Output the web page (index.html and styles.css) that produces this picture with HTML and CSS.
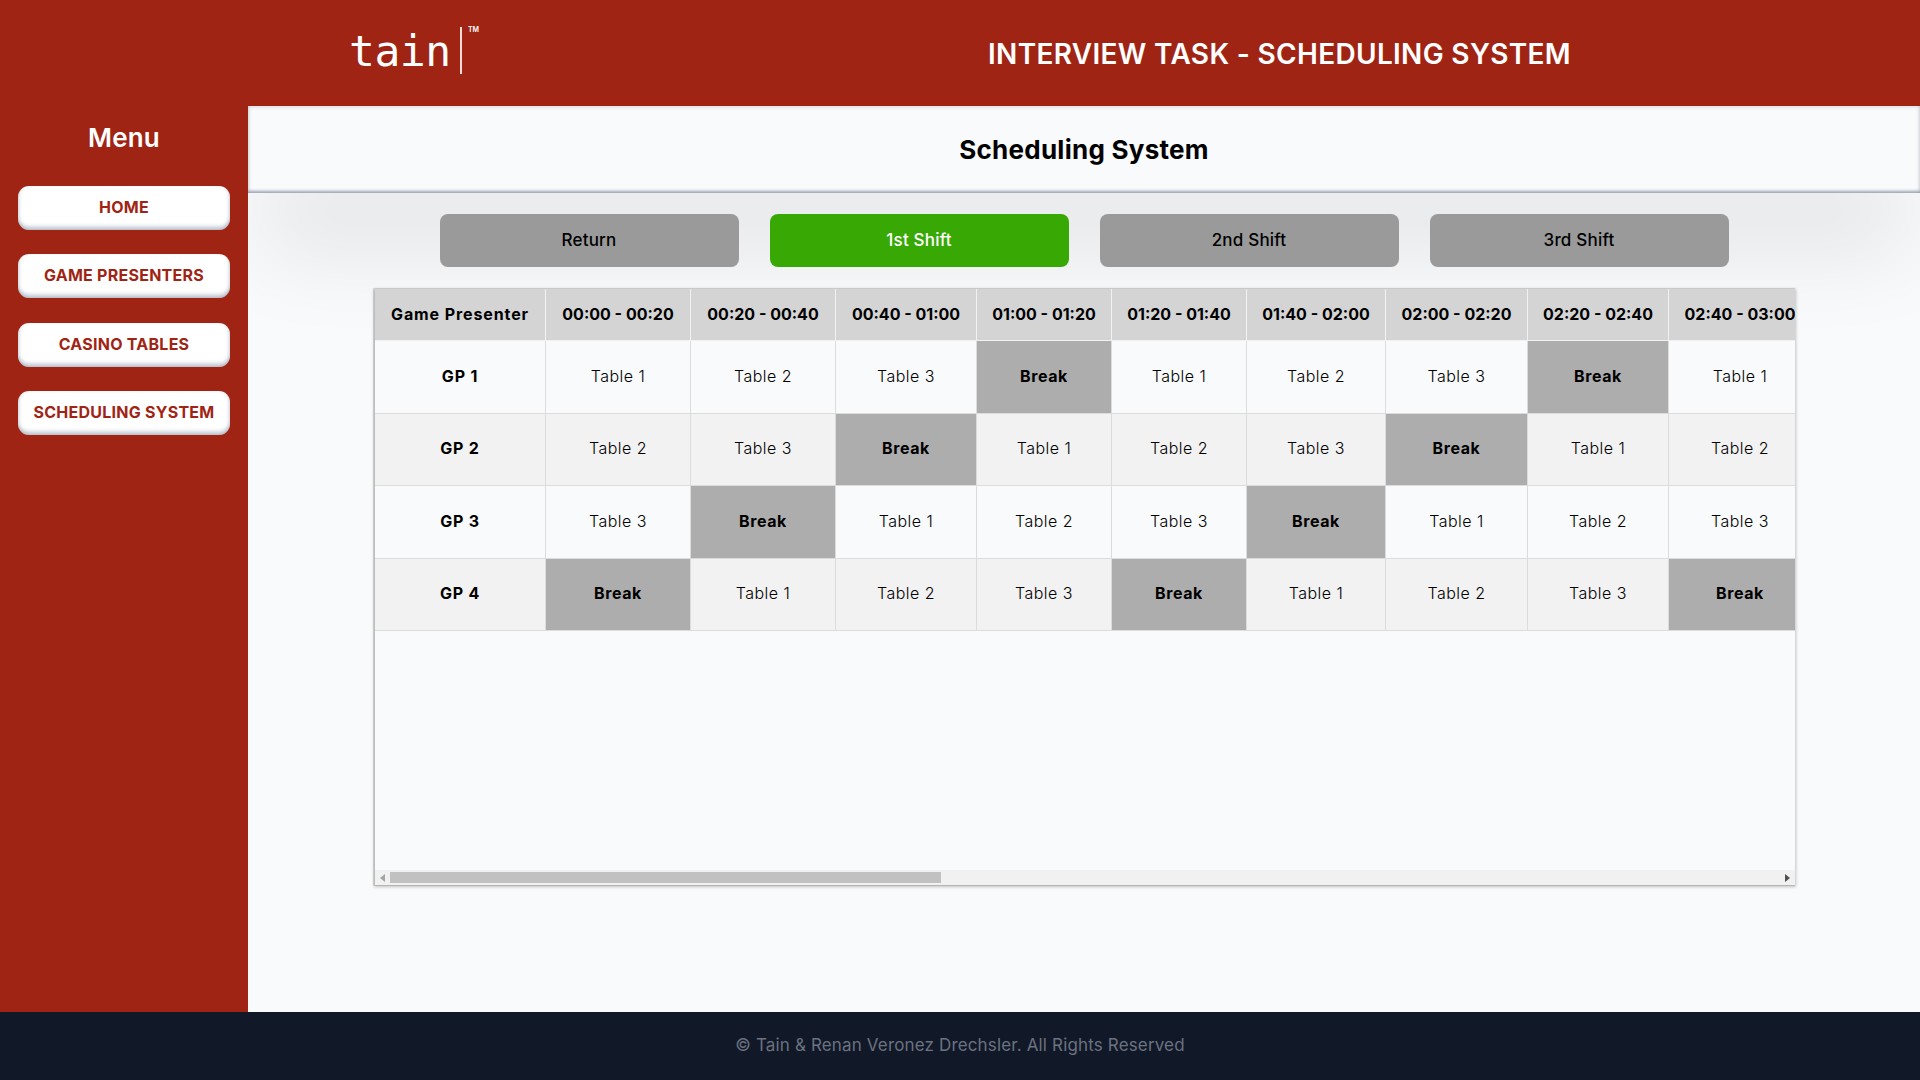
FILE: index.html
```html
<!DOCTYPE html>
<html lang="en">
    <head>
        <meta charset="UTF-8" />
        <meta name="viewport" content="width=device-width, initial-scale=1.0" />
        <title>Scheduling System</title>
        <link rel="stylesheet" href="styles.css">
    </head>
    <body>
        <header class="topbar">
            <div class="logo">
                <span class="logo-word">tain</span>
                <span class="logo-bar"></span>
                <span class="logo-tm">TM</span>
            </div>
            <h1 class="app-title">INTERVIEW TASK - SCHEDULING SYSTEM</h1>
        </header>

        <div class="shell">
            <nav class="sidebar">
                <h2>Menu</h2>
                <a class="nav-btn" href="#">HOME</a>
                <a class="nav-btn" href="#">GAME PRESENTERS</a>
                <a class="nav-btn" href="#">CASINO TABLES</a>
                <a class="nav-btn" href="#">SCHEDULING SYSTEM</a>
            </nav>

            <main class="content">
                <div class="page-title"><h2>Scheduling System</h2></div>

                <div class="shifts">
                    <button class="shift">Return</button>
                    <button class="shift active">1st Shift</button>
                    <button class="shift">2nd Shift</button>
                    <button class="shift">3rd Shift</button>
                </div>

                <div class="table-wrap">
                    <div class="table-view">
                        <table class="schedule">
                            <thead>
                                <tr><th>Game Presenter</th><th>00:00 - 00:20</th><th>00:20 - 00:40</th><th>00:40 - 01:00</th><th>01:00 - 01:20</th><th>01:20 - 01:40</th><th>01:40 - 02:00</th><th>02:00 - 02:20</th><th>02:20 - 02:40</th><th>02:40 - 03:00</th></tr>
                            </thead>
                            <tbody>
                                <tr><td class="gp">GP 1</td><td>Table 1</td><td>Table 2</td><td>Table 3</td><td class="break">Break</td><td>Table 1</td><td>Table 2</td><td>Table 3</td><td class="break">Break</td><td>Table 1</td></tr>
                                <tr><td class="gp">GP 2</td><td>Table 2</td><td>Table 3</td><td class="break">Break</td><td>Table 1</td><td>Table 2</td><td>Table 3</td><td class="break">Break</td><td>Table 1</td><td>Table 2</td></tr>
                                <tr><td class="gp">GP 3</td><td>Table 3</td><td class="break">Break</td><td>Table 1</td><td>Table 2</td><td>Table 3</td><td class="break">Break</td><td>Table 1</td><td>Table 2</td><td>Table 3</td></tr>
                                <tr><td class="gp">GP 4</td><td class="break">Break</td><td>Table 1</td><td>Table 2</td><td>Table 3</td><td class="break">Break</td><td>Table 1</td><td>Table 2</td><td>Table 3</td><td class="break">Break</td></tr>
                            </tbody>
                        </table>
                    </div>
                    <div class="scrollbar">
                        <span class="arrow arrow-left"></span>
                        <div class="scroll-track"><div class="scroll-thumb"></div></div>
                        <span class="arrow arrow-right"></span>
                    </div>
                </div>
            </main>
        </div>

        <footer class="footer">© Tain &amp; Renan Veronez Drechsler. All Rights Reserved</footer>
    </body>
</html>
```

FILE: styles.css
```css
* {
    box-sizing: border-box;
}
body {
    margin: 0;
    height: 100vh;
    overflow: hidden;
    display: flex;
    flex-direction: column;
    font-family: Inter, "Noto Sans", sans-serif;
    background: #f9fafb;
    color: #000;
}

/* top bar */
.topbar {
    height: 106px;
    flex: none;
    display: flex;
    background: #a02414;
    color: #fff;
    padding-left: 349px;
}
.logo {
    width: 639px;
    display: flex;
    align-items: flex-start;
}
.logo-word {
    font-family: "DejaVu Sans Mono", monospace;
    font-size: 43px;
    line-height: 50px;
    margin-top: 26px;
    letter-spacing: -0.5px;
    width: 111px;
}
.logo-bar {
    width: 2px;
    height: 47px;
    margin-top: 27px;
    background: #f3ddd9;
}
.logo-tm {
    font-size: 7px;
    font-weight: 600;
    line-height: 8px;
    margin: 26px 0 0 6px;
}
.app-title {
    margin: 0;
    align-self: center;
    padding-top: 1px;
    font-size: 28px;
    font-weight: 600;
    letter-spacing: 0.32px;
    white-space: nowrap;
}

/* sidebar */
.shell {
    flex: 1;
    display: flex;
    min-height: 0;
}
.sidebar {
    width: 248px;
    flex: none;
    background: #a02414;
    padding: 0 18px;
    display: flex;
    flex-direction: column;
}
.sidebar h2 {
    margin: 14px 0 31px;
    height: 35px;
    line-height: 35px;
    text-align: center;
    color: #fff;
    font-size: 26px;
    font-weight: 600;
    letter-spacing: 0.2px;
}
.nav-btn {
    height: 44px;
    margin-bottom: 24.3px;
    padding-bottom: 2px;
    display: flex;
    align-items: center;
    justify-content: center;
    background: #fff;
    border-radius: 11px;
    color: #a02414;
    font-size: 16px;
    font-weight: 700;
    letter-spacing: 0.25px;
    text-decoration: none;
    white-space: nowrap;
    box-shadow: inset 0 -4px 4px -1px rgba(100, 116, 139, 0.45), inset -3px 0 4px -3px rgba(100, 116, 139, 0.3), inset 3px 0 4px -3px rgba(100, 116, 139, 0.3);
}

/* main */
.content {
    flex: 1;
    min-width: 0;
    display: flex;
    flex-direction: column;
    overflow: hidden;
    position: relative;
}
/* soft grey glow that sits under the title bar */
.content::before {
    content: "";
    position: absolute;
    top: 0;
    left: 10px;
    right: 10px;
    height: 87px;
    box-shadow: 0 60px 90px rgba(0, 0, 0, 0.085);
}
.page-title {
    height: 87px;
    flex: none;
    display: flex;
    align-items: center;
    justify-content: center;
    background: #f9fafb;
    box-shadow: inset 0 0 4px rgba(100, 116, 139, 0.35), inset 0 -3px 3px -1px rgba(100, 116, 139, 0.55);
    position: relative;
}
.page-title h2 {
    margin: 0;
    font-size: 26px;
    font-weight: 700;
    letter-spacing: 0.25px;
}
.shifts {
    display: flex;
    justify-content: center;
    gap: 31px;
    margin-top: 21px;
    position: relative;
}
.shift {
    width: 299px;
    height: 53px;
    padding-bottom: 2px;
    border: none;
    border-radius: 8px;
    background: #9a9a9a;
    color: #000;
    font-family: inherit;
    font-size: 17px;
    font-weight: 500;
    letter-spacing: 0.2px;
    cursor: pointer;
}
.shift.active {
    background: #38a804;
    color: #fff;
}

/* table */
.table-wrap {
    width: 1420px;
    height: 596px;
    flex: none;
    margin: 22px 0 0 127px;
    display: flex;
    flex-direction: column;
    background: #f9fafb;
    box-shadow: 0 1px 3px 1px rgba(0, 0, 0, 0.22), -1px 0 0 1px #dcdcdc;
    position: relative;
}
.table-view {
    flex: 1;
    min-height: 0;
    overflow: hidden;
}
.schedule {
    table-layout: fixed;
    width: 1437px;
    border-collapse: separate;
    border-spacing: 0;
    text-align: center;
    font-size: 16px;
}
.schedule th {
    width: 142px;
    height: 52px;
    padding: 0 0 1px;
    background: #d4d4d4;
    font-size: 16px;
    font-weight: 700;
    white-space: nowrap;
    border-right: 1px solid #f1f1f1;
    border-bottom: 1px solid #f1f1f1;
}
.schedule th:nth-child(1) {
    width: 171px;
    letter-spacing: 0.9px;
}
.schedule th:nth-child(2),
.schedule th:nth-child(3) { width: 145px; }
.schedule th:nth-child(4) { width: 141px; }
.schedule th:nth-child(5),
.schedule th:nth-child(6) { width: 135px; }
.schedule th:nth-child(7) { width: 139px; }
.schedule th:nth-child(9) { width: 141px; }
.schedule th:nth-child(10) { width: 143px; }
.schedule td {
    height: 73px;
    padding: 0 0 2px;
    font-weight: 300;
    letter-spacing: 0.5px;
    border-right: 1px solid #dcdcdc;
    border-bottom: 1px solid #dcdcdc;
}
.schedule tbody tr:nth-child(even) td {
    height: 72px;
    padding-bottom: 3px;
    background: #f2f2f2;
}
.schedule td.gp {
    font-weight: 700;
    letter-spacing: 0.8px;
}
.schedule tbody tr td.break {
    background: #adadad;
    font-weight: 700;
    letter-spacing: 0.6px;
}

/* drawn scrollbar, the browser hides real ones */
.scrollbar {
    height: 15px;
    flex: none;
    display: flex;
    align-items: center;
    background: #f1f1f1;
}
.arrow {
    width: 15px;
    height: 15px;
    flex: none;
    display: flex;
    align-items: center;
    justify-content: center;
}
.arrow::before {
    content: "";
    border-top: 4px solid transparent;
    border-bottom: 4px solid transparent;
}
.arrow-left::before {
    border-right: 5px solid #a3a3a3;
}
.arrow-right::before {
    border-left: 5px solid #505050;
}
.scroll-track {
    flex: 1;
}
.scroll-thumb {
    width: 551px;
    height: 11px;
    background: #c1c1c1;
}

.footer {
    height: 68px;
    flex: none;
    padding-bottom: 2px;
    display: flex;
    align-items: center;
    justify-content: center;
    background: #111827;
    color: #6b7280;
    font-size: 17px;
    font-weight: 400;
    letter-spacing: 0.15px;
}
```
